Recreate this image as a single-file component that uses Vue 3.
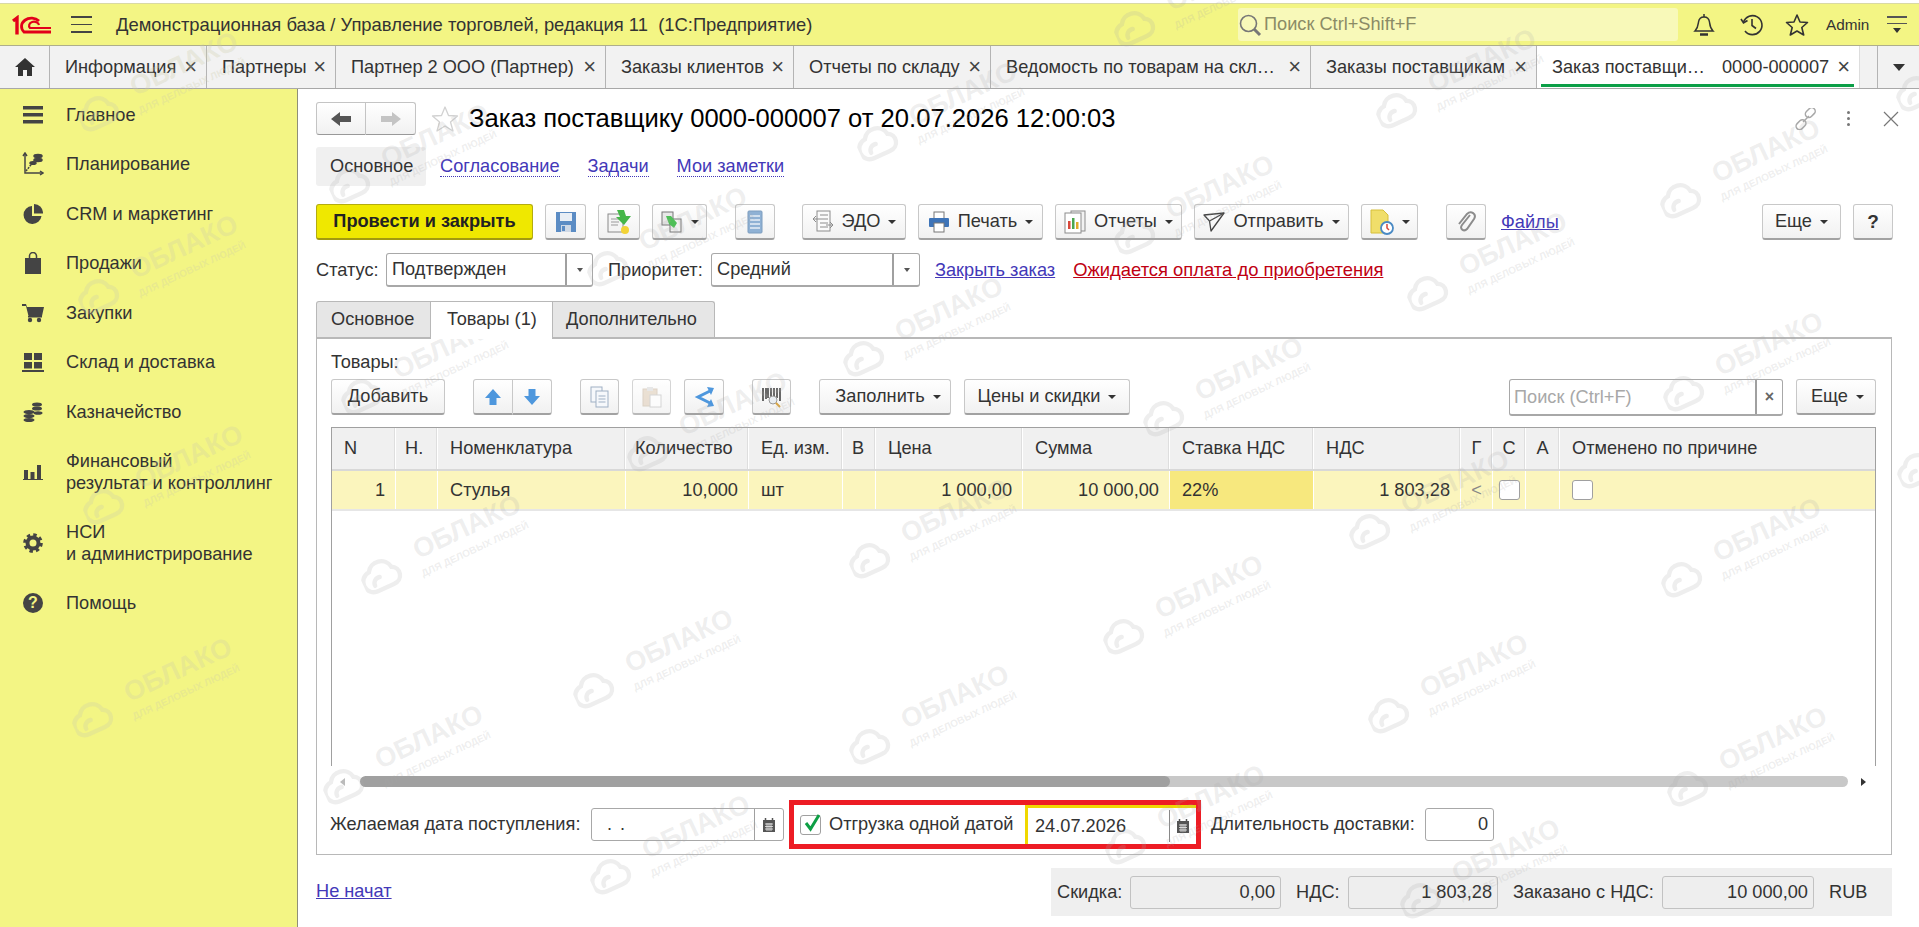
<script setup>
const appTitle = 'Демонстрационная база / Управление торговлей, редакция 11  (1С:Предприятие)'

const tabs = [
  { text: 'Информация', cls: 't1' },
  { text: 'Партнеры', cls: 't2' },
  { text: 'Партнер 2 ООО (Партнер)', cls: 't3' },
  { text: 'Заказы клиентов', cls: 't4' },
  { text: 'Отчеты по складу', cls: 't5' },
  { text: 'Ведомость по товарам на скл…', cls: 't6' },
  { text: 'Заказы поставщикам', cls: 't7' }
]

const clouds = [
  [98, 110], [98, 293], [103, 503], [92, 716],
  [349, 182], [361, 393], [381, 573], [343, 783],
  [607, 265], [647, 450], [593, 687], [610, 873],
  [877, 140], [863, 355], [869, 557], [869, 743],
  [1134, 25], [1134, 233], [1163, 415], [1123, 633], [1125, 843],
  [1396, 107], [1427, 290], [1369, 528], [1388, 712], [1420, 897],
  [1680, 197], [1683, 390], [1681, 576], [1687, 785],
  [1916, 90], [1917, 467]
]

const columns = [
  { title: 'N', cls: 'c-n', value: '1', align: 'right' },
  { title: 'Н.', cls: 'c-h', value: '' },
  { title: 'Номенклатура', cls: '', value: 'Стулья' },
  { title: 'Количество', cls: 'c-qty', value: '10,000', align: 'right' },
  { title: 'Ед. изм.', cls: '', value: 'шт' },
  { title: 'В', cls: 'c-v', value: '' },
  { title: 'Цена', cls: '', value: '1 000,00', align: 'right' },
  { title: 'Сумма', cls: '', value: '10 000,00', align: 'right' },
  { title: 'Ставка НДС', cls: '', value: '22%', current: true },
  { title: 'НДС', cls: '', value: '1 803,28', align: 'right' },
  { title: 'Г', cls: 'c-mid', value: '<', muted: true },
  { title: 'С', cls: 'c-mid', check: true },
  { title: 'А', cls: 'c-mid', value: '' },
  { title: 'Отменено по причине', cls: '', check: true }
]
</script>

<template>
  <div class="page">
    <header class="topbar">
      <svg class="logo" viewBox="0 0 39 20" width="39" height="20" fill="none" stroke="#e2001a">
        <path d="M1 6 L5 3 V19.500" stroke-width="3.400" />
        <path d="M27 6 A9 7.500 0 1 0 12 17 H39" stroke-width="2.800" />
        <path d="M27 10 A5 4 0 1 0 18 13 H39" stroke-width="2.200" />
      </svg>
      <div class="burger"><i></i><i></i><i></i></div>
      <div class="app-title">{{ appTitle }}</div>
      <div class="global-search">
        <svg viewBox="0 0 24 24" width="24" height="24" fill="none" stroke="#777" stroke-width="1.600">
          <circle cx="10.500" cy="10.500" r="8" />
          <path d="M16 16 L22 22" stroke-width="3" />
        </svg>
        <span>Поиск Ctrl+Shift+F</span>
      </div>
      <div class="top-icons">
        <svg viewBox="0 0 22 24" width="22" height="24" fill="none" stroke="#333" stroke-width="1.500">
          <path d="M2 18 H20 C17 15 17 13 16.500 9 C16 5.500 14 4 11 4 C8 4 6 5.500 5.500 9 C5 13 5 15 2 18 Z" />
          <path d="M11 1 V4" />
          <path d="M7 21.500 H15" stroke-width="2.500" />
        </svg>
        <svg viewBox="0 0 24 24" width="24" height="24" fill="none" stroke="#333" stroke-width="1.600">
          <path d="M3.500 9 A9.500 9.500 0 1 1 5 18" />
          <path d="M1 6 L3.500 10 L7.500 7.500" />
          <path d="M12 6 V12.500 L16 15.500" />
        </svg>
        <svg viewBox="0 0 24 24" width="24" height="24" fill="none" stroke="#333" stroke-width="1.600" stroke-linejoin="round">
          <path d="M12 2 L15 9 L22.500 9.500 L16.800 14.500 L18.700 22 L12 18 L5.300 22 L7.200 14.500 L1.500 9.500 L9 9 Z" />
        </svg>
        <span class="admin">Admin</span>
        <div class="user-menu">
          <i class="l1"></i><i class="l2"></i><b></b>
        </div>
      </div>
    </header>

    <nav class="tabs">
      <div class="tab home">
        <svg viewBox="0 0 20 18" width="20" height="18" fill="#333">
          <path d="M10 0 L20 9 H17 V18 H12 V12 H8 V18 H3 V9 H0 Z" />
        </svg>
      </div>
      <div v-for="t in tabs" :key="t.text" class="tab" :class="t.cls">
        <span class="tab-text">{{ t.text }}</span>
        <span class="tab-x">×</span>
      </div>
      <div class="tab active">
        <span class="a-name">Заказ поставщи…</span>
        <span class="a-num">0000-000007</span>
        <span class="tab-x">×</span>
      </div>
      <div class="tab spacer"></div>
      <div class="tab more"><b class="caret big"></b></div>
    </nav>

    <div class="body">
      <aside class="side">
        <div class="side-item">
          <svg viewBox="0 0 20 20" width="20" height="20" fill="#444"><rect y="1" width="20" height="3.500" /><rect y="8" width="20" height="3.500" /><rect y="15" width="20" height="3.500" /></svg>
          <span>Главное</span>
        </div>
        <div class="side-item">
          <svg viewBox="0 0 22 24" width="22" height="24" fill="none" stroke="#444" stroke-width="1.500"><path d="M3 1 V21 H21" /><path d="M1 4 L3 1 L5 4 M18 19 L21 21 L18 23" /><path d="M4 19 L12 9" stroke-dasharray="2 1" /><ellipse cx="16" cy="4" rx="4" ry="1.500" fill="#444" /><ellipse cx="16" cy="8" rx="4" ry="1.500" fill="#444" /><ellipse cx="11" cy="11" rx="3" ry="1.300" fill="#444" /></svg>
          <span>Планирование</span>
        </div>
        <div class="side-item">
          <svg viewBox="0 0 20 20" width="20" height="20" fill="#444"><path d="M9 2 A9 9 0 1 0 18.500 12 H9 Z" /><path d="M11 0 A9 9 0 0 1 20 9.500 H11 Z" /></svg>
          <span>CRM и маркетинг</span>
        </div>
        <div class="side-item">
          <svg viewBox="0 0 18 22" width="18" height="22" fill="#444"><rect x="1" y="6" width="16" height="16" /><path d="M5.500 8 V4 A3.500 3.500 0 0 1 12.500 4 V8" fill="none" stroke="#444" stroke-width="1.500" /></svg>
          <span>Продажи</span>
        </div>
        <div class="side-item">
          <svg viewBox="0 0 22 20" width="22" height="20" fill="#444"><path d="M0 1 H4 L5 4 H22 L20 13 H6.500 L4 3 H0 Z" /><circle cx="8" cy="17" r="2.200" /><circle cx="17" cy="17" r="2.200" /><rect x="6" y="13" width="14" height="1.500" /></svg>
          <span>Закупки</span>
        </div>
        <div class="side-item">
          <svg viewBox="0 0 22 20" width="22" height="20" fill="#444"><rect x="2" y="1" width="8" height="7" /><rect x="12" y="1" width="8" height="7" /><rect x="2" y="10" width="8" height="6.500" /><rect x="12" y="10" width="8" height="6.500" /><rect y="18" width="22" height="2" /></svg>
          <span>Склад и доставка</span>
        </div>
        <div class="side-item">
          <svg viewBox="0 0 20 20" width="20" height="20" fill="#444"><ellipse cx="6" cy="10" rx="5.500" ry="2" /><ellipse cx="6" cy="14" rx="5.500" ry="2" /><ellipse cx="6" cy="18" rx="5.500" ry="2" /><ellipse cx="14" cy="2.500" rx="5" ry="2" /><ellipse cx="14" cy="6.500" rx="5" ry="2" /><ellipse cx="15" cy="11" rx="4.500" ry="1.800" /></svg>
          <span>Казначейство</span>
        </div>
        <div class="side-item double">
          <svg viewBox="0 0 20 16" width="20" height="16" fill="#444"><rect x="1" y="6" width="4" height="9" /><rect x="7.500" y="8" width="4" height="7" /><rect x="14" y="1" width="4" height="14" /><rect y="15" width="20" height="1" /></svg>
          <span>Финансовый<br />результат и контроллинг</span>
        </div>
        <div class="side-item double">
          <svg viewBox="0 0 20 20" width="20" height="20" fill="none" stroke="#444"><circle cx="10" cy="10" r="5.500" stroke-width="4" /><circle cx="10" cy="10" r="8.200" stroke-width="3.200" stroke-dasharray="3.400 3.040" /></svg>
          <span>НСИ<br />и администрирование</span>
        </div>
        <div class="side-item">
          <div class="help-ico">?</div>
          <span>Помощь</span>
        </div>
      </aside>

      <main class="form">
        <div class="form-head">
          <div class="nav-group">
            <div class="nav-btn">
              <svg viewBox="0 0 20 14" width="20" height="14" fill="#555"><path d="M0 7 L9 0 V4 H20 V10 H9 V14 Z" /></svg>
            </div>
            <div class="nav-btn">
              <svg viewBox="0 0 20 14" width="20" height="14" fill="#c4c4c4"><path d="M20 7 L11 0 V4 H0 V10 H11 V14 Z" /></svg>
            </div>
          </div>
          <svg class="star" viewBox="0 0 28 28" width="28" height="28" fill="none" stroke="#d2d2d2" stroke-width="1.300" stroke-linejoin="round">
            <path d="M14 2 L17.500 10.500 L26.500 11 L19.500 17 L22 26 L14 21 L6 26 L8.500 17 L1.500 11 L10.500 10.500 Z" />
          </svg>
          <h1 class="form-title">Заказ поставщику 0000-000007 от 20.07.2026 12:00:03</h1>
          <div class="head-icons">
            <svg viewBox="0 0 22 22" width="22" height="22" fill="none" stroke="#a8a8a8" stroke-width="1.500">
              <rect x="11" y="1" width="11" height="7" rx="3.500" transform="rotate(-45 16 6)" />
              <rect x="0" y="13" width="11" height="7" rx="3.500" transform="rotate(-45 6 16)" />
              <path d="M8 14 L14 8" />
            </svg>
            <div class="dots"><i></i><i></i><i></i></div>
            <svg viewBox="0 0 16 16" width="16" height="16" fill="none" stroke="#777" stroke-width="1.200"><path d="M1 1 L15 15 M15 1 L1 15" /></svg>
          </div>
        </div>

        <div class="sub-nav">
          <span class="sub-current">Основное</span>
          <a class="sub-link l-a">Согласование</a>
          <a class="sub-link l-b">Задачи</a>
          <a class="sub-link l-c">Мои заметки</a>
        </div>

        <div class="cmd">
          <button class="btn primary">Провести и закрыть</button>
          <button class="btn w41">
            <svg viewBox="0 0 22 22" width="22" height="22"><rect x="1" y="1" width="20" height="20" fill="#5b8cc4" /><rect x="5" y="2" width="12" height="8" fill="#e8eef5" /><rect x="6" y="14" width="10" height="7" fill="#cfd9e6" /><rect x="7" y="15" width="3" height="5" fill="#5b8cc4" /></svg>
          </button>
          <button class="btn w42">
            <svg viewBox="0 0 26 26" width="26" height="26"><rect x="2" y="5" width="15" height="18" fill="#f4f4f4" stroke="#8a8a8a" /><path d="M5 10 H13 M5 13 H13 M5 16 H12" stroke="#9a9a9a" /><path d="M11 1 H18 L20 7 H25 L18 16 L10 8 H14 Z" fill="#45b649" /><circle cx="19" cy="21" r="4" fill="#f2d337" /></svg>
          </button>
          <button class="btn w55">
            <svg viewBox="0 0 22 22" width="22" height="22"><rect x="1" y="1" width="11" height="13" fill="#e8e8e8" stroke="#777" /><rect x="9" y="8" width="11" height="13" fill="#f1f1f1" stroke="#777" /><path d="M5 5 L10 5 L16 12 L13 17 L8 13 Z" fill="#4fbf58" /></svg>
            <b class="caret"></b>
          </button>
          <button class="btn w40 gap-r">
            <svg viewBox="0 0 16 24" width="16" height="24"><rect x="1" y="1" width="14" height="22" rx="1" fill="#8fb1d4" stroke="#7d9dbf" /><path d="M3 6 H13 M3 10 H13 M3 14 H13 M3 18 H13" stroke="#e7eef6" stroke-width="1.500" /></svg>
          </button>
          <button class="btn w104">
            <svg viewBox="0 0 22 24" width="22" height="24" fill="none" stroke="#8c8c8c"><rect x="5" y="1" width="13" height="20" fill="#fafafa" /><path d="M8 5 H16 M8 9 H16 M8 13 H16 M8 17 H16" /><path d="M1 9 L4 6 M1 9 L4 12 M1 9 H8 M21 15 L18 12 M21 15 L18 18 M21 15 H14" /></svg>
            <span>ЭДО</span><b class="caret"></b>
          </button>
          <button class="btn w125">
            <svg viewBox="0 0 22 22" width="22" height="22"><rect x="6" y="1" width="10" height="7" fill="#fff" stroke="#777" /><rect x="1" y="7" width="20" height="9" rx="1" fill="#3e74b8" /><rect x="6" y="12" width="10" height="9" fill="#fff" stroke="#777" /></svg>
            <span>Печать</span><b class="caret"></b>
          </button>
          <button class="btn w127">
            <svg viewBox="0 0 22 24" width="22" height="24"><rect x="7" y="1" width="14" height="20" fill="#f2f2f2" stroke="#8c8c8c" /><rect x="1" y="3" width="16" height="20" fill="#fff" stroke="#8c8c8c" /><rect x="4" y="11" width="2.500" height="8" fill="#d8483b" /><rect x="8" y="8" width="2.500" height="11" fill="#4aa64e" /><rect x="12" y="12" width="2.500" height="7" fill="#e0a92a" /></svg>
            <span>Отчеты</span><b class="caret"></b>
          </button>
          <button class="btn w155">
            <svg viewBox="0 0 22 20" width="22" height="20" fill="none" stroke="#444" stroke-width="1.300" stroke-linejoin="round"><path d="M1 3 L21 1 L8 19 L6.500 9 Z" /><path d="M6.500 9 L21 1" /></svg>
            <span>Отправить</span><b class="caret"></b>
          </button>
          <button class="btn w57">
            <svg viewBox="0 0 24 26" width="24" height="26"><path d="M1 1 H13 L18 6 V24 H1 Z" fill="#f0de6a" stroke="#d6bf3b" /><circle cx="17" cy="19" r="6" fill="#fff" stroke="#4a8ac4" stroke-width="1.800" /><path d="M17 15 V19 L19 21" fill="none" stroke="#d8483b" stroke-width="1.500" /></svg>
            <b class="caret"></b>
          </button>
          <button class="btn w40 clip">
            <svg viewBox="0 0 20 24" width="20" height="24" fill="none" stroke="#8c8c8c" stroke-width="2"><path d="M14 5 L6 15 C3 19 8 22 11 19 L18 9 C21 4 15 0 11 4 L3 14" /></svg>
          </button>
          <a class="files">Файлы</a>
          <button class="btn w79 push">Еще<b class="caret"></b></button>
          <button class="btn w40 question">?</button>
        </div>

        <div class="status-row">
          <span class="lbl st-lbl">Статус:</span>
          <div class="combo status-combo"><span>Подтвержден</span><div class="combo-btn"><b class="caret sm"></b></div></div>
          <span class="lbl pr-lbl">Приоритет:</span>
          <div class="combo prio-combo"><span>Средний</span><div class="combo-btn"><b class="caret sm"></b></div></div>
          <a class="close-link">Закрыть заказ</a>
          <a class="red-link">Ожидается оплата до приобретения</a>
        </div>

        <div class="page-tabs">
          <div class="ptab p1">Основное</div>
          <div class="ptab p2 on">Товары (1)</div>
          <div class="ptab p3">Дополнительно</div>
        </div>

        <section class="panel">
          <div class="goods-label">Товары:</div>
          <div class="goods-bar">
            <button class="btn add">Добавить</button>
            <div class="pair">
              <button class="btn half">
                <svg viewBox="0 0 18 18" width="18" height="18" fill="#4e97dd"><path d="M9 1 L17 10 H12.500 V17 H5.500 V10 H1 Z" /></svg>
              </button>
              <button class="btn half">
                <svg viewBox="0 0 18 18" width="18" height="18" fill="#4e97dd"><path d="M9 17 L17 8 H12.500 V1 H5.500 V8 H1 Z" /></svg>
              </button>
            </div>
            <button class="btn w39 m-copy">
              <svg viewBox="0 0 20 22" width="20" height="22" fill="#f6f8fb" stroke="#9fb0c4"><rect x="1" y="1" width="11" height="15" /><rect x="6" y="5" width="12" height="16" /><path d="M8.500 10 H15.500 M8.500 13 H15.500 M8.500 16 H15.500" /></svg>
            </button>
            <button class="btn w39 disabled">
              <svg viewBox="0 0 20 22" width="20" height="22" opacity=".6"><rect x="1" y="3" width="14" height="17" fill="#d6bfa3" stroke="#b8a186" /><rect x="5" y="1" width="6" height="4" fill="#cfcfcf" /><rect x="8" y="9" width="11" height="12" fill="#fff" stroke="#aaa" /></svg>
            </button>
            <button class="btn w40">
              <svg viewBox="0 0 22 22" width="22" height="22" fill="none" stroke="#4e97dd" stroke-width="3"><path d="M17 5 L5 11 L17 17" /><path d="M14 1 L21 2 L18 9 Z M14 21 L21 20 L18 13 Z" fill="#4e97dd" stroke="none" /></svg>
            </button>
            <button class="btn w39 m-bar">
              <svg viewBox="0 0 22 22" width="22" height="22"><path d="M2 2 V15 M5 2 V13 M7 2 V12 M10 2 V11 M13 2 V11 M16 2 V12 M19 2 V15" stroke="#444" stroke-width="1.600" /><circle cx="12" cy="14" r="4" fill="#e9eef3" stroke="#9a9a9a" /><path d="M15 17 L19 21" stroke="#d9a441" stroke-width="2" /></svg>
            </button>
            <button class="btn w132 m-fill">Заполнить<b class="caret"></b></button>
            <button class="btn w166">Цены и скидки<b class="caret"></b></button>
            <div class="table-search">
              <span>Поиск (Ctrl+F)</span>
              <div class="clear">×</div>
            </div>
            <button class="btn w80">Еще<b class="caret"></b></button>
          </div>

          <div class="table">
            <div class="tr head">
              <div v-for="c in columns" :key="c.title" class="td" :class="c.cls">{{ c.title }}</div>
            </div>
            <div class="tr row">
              <div
                v-for="c in columns"
                :key="c.title"
                class="td"
                :class="[c.cls, { right: c.align === 'right', current: c.current, muted: c.muted }]"
              >
                <i v-if="c.check" class="box"></i>
                <template v-else>{{ c.value }}</template>
              </div>
            </div>
          </div>

          <div class="hscroll">
            <b class="arrow left"></b>
            <div class="track"><div class="thumb"></div></div>
            <b class="arrow right"></b>
          </div>

          <div class="date-row">
            <span class="lbl wish-lbl">Желаемая дата поступления:</span>
            <div class="date-field wish">
              <span class="date-val dots-val">. .</span>
              <div class="cal">
                <svg viewBox="0 0 12 14" width="12" height="14" fill="#555"><path d="M0 2 H12 V14 H0 Z" /><path d="M2.500 0 V3 M9.500 0 V3" stroke="#555" stroke-width="1.500" /><path d="M2 6 H10 M2 8.500 H10 M2 11 H10 M4 5 V13 M6 5 V13 M8 5 V13" stroke="#eee" stroke-width=".8" /></svg>
              </div>
            </div>
            <div class="marked">
              <i class="box checked">
                <svg viewBox="0 0 20 20" width="20" height="20" fill="none" stroke="#0e9f45" stroke-width="3"><path d="M4 10 L8.500 16 L17 2" /></svg>
              </i>
              <span class="marked-lbl">Отгрузка одной датой</span>
              <div class="date-field active-date">
                <span class="date-val">24.07.2026</span>
                <div class="cal">
                  <svg viewBox="0 0 12 14" width="12" height="14" fill="#555"><path d="M0 2 H12 V14 H0 Z" /><path d="M2.500 0 V3 M9.500 0 V3" stroke="#555" stroke-width="1.500" /><path d="M2 6 H10 M2 8.500 H10 M2 11 H10 M4 5 V13 M6 5 V13 M8 5 V13" stroke="#eee" stroke-width=".8" /></svg>
                </div>
              </div>
            </div>
            <span class="lbl dur-lbl">Длительность доставки:</span>
            <div class="dur-field">0</div>
          </div>
        </section>

        <div class="footer">
          <a class="not-started">Не начат</a>
          <div class="totals">
            <span class="lbl tl-a">Скидка:</span>
            <div class="total-field tf-a">0,00</div>
            <span class="lbl tl-b">НДС:</span>
            <div class="total-field tf-b">1 803,28</div>
            <span class="lbl tl-c">Заказано с НДС:</span>
            <div class="total-field tf-c">10 000,00</div>
            <span class="lbl rub">RUB</span>
          </div>
        </div>
      </main>
    </div>

    <div class="watermarks">
      <div
        v-for="c in clouds"
        :key="c[0] + '-' + c[1]"
        class="wm"
        :class="{ 'on-side': c[0] < 250 }"
        :style="{ left: c[0] + 'px', top: c[1] + 'px' }"
      >
        <svg class="wm-cloud" viewBox="0 0 48 42" width="42" height="37" fill="none" stroke-width="5" stroke-linecap="round">
          <path d="M13 38 H33 A10 10 0 0 0 38 19 A14 14 0 0 0 12 14 A12 12 0 0 0 13 38" />
          <path d="M12 31 A7 7 0 0 1 21 24" />
        </svg>
        <span class="wm-title">ОБЛАКО</span>
        <span class="wm-sub">ДЛЯ ДЕЛОВЫХ ЛЮДЕЙ</span>
      </div>
    </div>
  </div>
</template>

<style>
html, body {
  margin: 0;
  overflow: hidden;
  background: #fff;
}
</style>

<style scoped>
.page {
  position: relative;
  width: 1919px;
  height: 927px;
  overflow: hidden;
  padding-top: 3px;
  box-sizing: border-box;
  font-family: "Liberation Sans", Arial, sans-serif;
  font-size: 18.200px;
  color: #333;
  background: #fff;
}
.topbar {
  height: 43px;
  box-sizing: border-box;
  display: flex;
  align-items: center;
  background: #f3f584;
  border-top: 1px solid #d9d9a4;
  border-bottom: 1px solid #aeae8c;
}
.logo { margin-left: 12px; }
.burger { margin-left: 20px; width: 21px; display: flex; flex-direction: column; gap: 6px; }
.burger i { display: block; height: 1.500px; background: #444; }
.app-title { margin-left: 24px; flex: 1; white-space: pre; color: #333; font-size: 18.400px; }
.global-search {
  width: 440px;
  height: 33px;
  display: flex;
  align-items: center;
  gap: 2px;
  background: #f8f9b9;
  border-radius: 3px;
  color: #8b8b66;
}
.top-icons { width: 241px; display: flex; align-items: center; height: 100%; position: relative; }
.top-icons svg:nth-child(1) { margin-left: 15px; }
.top-icons svg:nth-child(2) { margin-left: 25px; }
.top-icons svg:nth-child(3) { margin-left: 21px; }
.admin { margin-left: 17px; font-size: 15.300px; }
.user-menu { margin-left: 18px; width: 20px; display: flex; flex-direction: column; align-items: center; }
.user-menu i { display: block; height: 1.500px; background: #555; }
.user-menu .l1 { width: 20px; margin-bottom: 5px; }
.user-menu .l2 { width: 20px; margin-bottom: 4px; }
.user-menu b { width: 0; height: 0; border: 4px solid transparent; border-top: 5px solid #333; border-bottom: 0; }

.tabs {
  height: 43px;
  box-sizing: border-box;
  display: flex;
  background: #f2f2f2;
  border-bottom: 1px solid #a8a8a8;
}
.tab {
  box-sizing: border-box;
  height: 100%;
  flex: none;
  display: flex;
  align-items: center;
  justify-content: space-between;
  padding: 0 9px 0 15px;
  border-right: 1px solid #b4b4b4;
  color: #333;
  overflow: hidden;
}
.tab-text { white-space: nowrap; }
.tab-x { font-size: 22px; line-height: 1; color: #444; flex: none; }
.home { width: 50px; padding: 0; justify-content: center; }
.t1 { width: 157px; }
.t2 { width: 129px; }
.t3 { width: 270px; }
.t4 { width: 188px; }
.t5 { width: 197px; }
.t6 { width: 320px; }
.t7 { width: 226px; }
.active {
  width: 323px;
  background: #fff;
  position: relative;
  border-right: 1px solid #ddd;
}
.active::after {
  content: "";
  position: absolute;
  left: 4px;
  right: 5px;
  bottom: 1px;
  height: 3px;
  background: #0c9f47;
}
.a-name { white-space: nowrap; }
.a-num { white-space: nowrap; margin-left: auto; margin-right: 8px; }
.spacer { width: 18px; padding: 0; }
.more { flex: 1; padding: 0; border-right: 0; justify-content: center; }

.body { display: flex; height: 838px; }
.side {
  width: 298px;
  box-sizing: border-box;
  flex: none;
  background: #f3f584;
  border-right: 1px solid #8f8f78;
  padding-top: 1px;
}
.side-item {
  height: 49.500px;
  display: flex;
  align-items: center;
  position: relative;
  padding-left: 66px;
  line-height: 22px;
  color: #333;
}
.side-item.double { height: 71px; }
.side-item svg, .help-ico { position: absolute; left: 33px; top: 50%; transform: translate(-50%, -50%); }
.help-ico {
  width: 20px;
  height: 20px;
  border-radius: 50%;
  background: #444;
  color: #f3f584;
  font-weight: 700;
  font-size: 16px;
  line-height: 20px;
  text-align: center;
}

.form { flex: 1; padding: 13px 27px 0 18px; min-width: 0; }
.form-head { height: 33px; display: flex; align-items: center; }
.nav-group { display: flex; }
.nav-btn {
  width: 50px;
  height: 33px;
  box-sizing: border-box;
  display: flex;
  align-items: center;
  justify-content: center;
  background: linear-gradient(#fff, #f1f1f1);
  border: 1px solid #c4c4c4;
  border-bottom-color: #999;
}
.nav-btn:first-child { border-radius: 3px 0 0 3px; }
.nav-btn:last-child { border-radius: 0 3px 3px 0; border-left: 0; }
.star { margin-left: 15px; }
.form-title { margin: 0 0 0 10px; font-size: 25.600px; font-weight: 400; color: #000; white-space: nowrap; flex: 1; }
.head-icons { display: flex; align-items: center; margin-right: -7px; }
.dots { display: flex; flex-direction: column; gap: 3px; margin: 0 33px 0 30px; }
.dots i { display: block; width: 3px; height: 3px; border-radius: 50%; background: #777; }

.sub-nav { margin-top: 12px; height: 39px; display: flex; align-items: center; }
.sub-current {
  width: 110px;
  height: 39px;
  box-sizing: border-box;
  padding-left: 14px;
  line-height: 38px;
  background: #f0f0f0;
  border-radius: 3px;
}
.sub-link { color: #4338b8; border-bottom: 1px dotted #4338b8; line-height: 20px; }
.l-a { margin-left: 14px; }
.l-b { margin-left: 28px; }
.l-c { margin-left: 28px; }

.cmd { margin-top: 18px; height: 36px; display: flex; align-items: stretch; gap: 12px; }
.btn {
  box-sizing: border-box;
  padding: 0;
  display: flex;
  align-items: center;
  justify-content: center;
  gap: 8px;
  height: 36px;
  font: inherit;
  color: #333;
  background: linear-gradient(#fff, #f1f1f1);
  border: 1px solid #c8c8c8;
  border-bottom: 2px solid #a2a2a2;
  border-radius: 3px;
  flex: none;
}
.primary {
  width: 217px;
  background: #efe800;
  border-color: #b4ac10;
  border-bottom-color: #a29a10;
  font-weight: 700;
  color: #222;
}
.w40 { width: 40px; }
.w41 { width: 41px; }
.w42 { width: 42px; }
.w55 { width: 55px; }
.w57 { width: 57px; }
.w79 { width: 79px; }
.w80 { width: 80px; padding-left: 3px; }
.w104 { width: 104px; }
.w125 { width: 125px; }
.w127 { width: 127px; }
.w155 { width: 155px; }
.w39 { width: 39px; }
.w132 { width: 132px; padding-left: 6px; }
.w166 { width: 166px; }
.gap-r { margin-right: 15px; margin-left: 16px; }
.clip { margin-left: 16px; }
.files { align-self: center; margin-left: 3px; color: #4338b8; text-decoration: underline; }
.push { margin-left: auto; }
.question { font-weight: 700; font-size: 19px; margin-right: -1px; }
.caret {
  display: inline-block;
  width: 0;
  height: 0;
  border-left: 4px solid transparent;
  border-right: 4px solid transparent;
  border-top: 4px solid #333;
  flex: none;
}
.caret.big { border-left-width: 6px; border-right-width: 6px; border-top-width: 7px; }
.caret.sm { border-left-width: 3px; border-right-width: 3px; border-top-width: 4px; border-top-color: #555; }

.status-row { margin-top: 13px; height: 34px; display: flex; align-items: center; }
.lbl { color: #333; white-space: nowrap; flex: none; }
.st-lbl { width: 70px; }
.combo {
  height: 34px;
  box-sizing: border-box;
  display: flex;
  align-items: center;
  border: 1px solid #a8a8a8;
  border-bottom-width: 2px;
  border-radius: 3px;
  padding-left: 5px;
  background: #fff;
  flex: none;
}
.combo span { flex: 1; }
.combo-btn {
  width: 27px;
  height: 100%;
  box-sizing: border-box;
  border-left: 2px solid #a0a0a0;
  display: flex;
  align-items: center;
  justify-content: center;
}
.status-combo { width: 207px; }
.pr-lbl { margin-left: 15px; width: 103px; }
.prio-combo { width: 209px; }
.close-link { margin-left: 15px; color: #4338b8; text-decoration: underline; white-space: nowrap; }
.red-link { margin-left: 18px; color: #c00012; text-decoration: underline; white-space: nowrap; font-size: 18.400px; }

.page-tabs { margin-top: 14px; height: 36px; display: flex; position: relative; z-index: 1; }
.ptab {
  box-sizing: border-box;
  height: 36px;
  line-height: 34px;
  padding-left: 16px;
  background: #e6e6e6;
  border: 1px solid #b8b8b8;
  border-bottom: 0;
  border-left: 0;
}
.p1 { width: 115px; border-left: 1px solid #b8b8b8; border-radius: 3px 0 0 0; padding-left: 14px; }
.p2 { width: 122px; }
.p3 { width: 162px; border-radius: 0 3px 0 0; padding-left: 13px; }
.on { background: #fff; height: 38px; }

.panel {
  height: 518px;
  box-sizing: border-box;
  border: 1px solid #b8b8b8;
  border-top-width: 2px;
  padding: 13px 15px 0 14px;
}
.goods-label { height: 20px; line-height: 20px; }
.goods-bar { margin-top: 7px; height: 36px; display: flex; gap: 13px; align-items: flex-start; }
.goods-bar .btn { height: 36px; }
.add { width: 114px; }
.pair { display: flex; margin-left: 15px; }
.half { width: 40px; }
.pair .half:first-child { border-radius: 3px 0 0 3px; }
.pair .half:last-child { border-radius: 0 3px 3px 0; border-left: 0; width: 39px; }
.m-copy { margin-left: 15px; }
.disabled { opacity: .75; }
.m-bar { margin-left: 15px; }
.m-fill { margin-left: 15px; }
.table-search {
  margin-left: auto;
  width: 274px;
  height: 37px;
  box-sizing: border-box;
  display: flex;
  align-items: center;
  border: 1px solid #a8a8a8;
  border-bottom-width: 2px;
  border-radius: 3px;
  padding-left: 4px;
  color: #a8a8a8;
  background: #fff;
}
.table-search span { flex: 1; }
.clear {
  width: 27px;
  height: 100%;
  box-sizing: border-box;
  border-left: 2px solid #a0a0a0;
  display: flex;
  align-items: center;
  justify-content: center;
  color: #666;
  font-weight: 700;
  font-size: 16px;
}

.table {
  margin-top: 12px;
  height: 339px;
  box-sizing: border-box;
  border: 1px solid #a0a0a0;
  border-bottom: 0;
}
.tr {
  display: grid;
  grid-template-columns: 64px 42px 188px 123px 94px 33px 147px 147px 144px 147px 32px 33px 34px 1fr;
}
.head { height: 43px; background: #f0f0f0; border-bottom: 2px solid #d8d8d8; box-sizing: border-box; }
.row { height: 40px; background: #fbf5bd; border-bottom: 2px solid #e6e6e6; box-sizing: border-box; }
.td {
  box-sizing: border-box;
  padding: 0 10px 0 12px;
  display: flex;
  align-items: center;
  white-space: nowrap;
  overflow: hidden;
  border-right: 1px solid #fff;
  min-width: 0;
}
.head .td { box-shadow: inset -1px 0 #dedede; }
.td:last-child { border-right: 0; box-shadow: none !important; }
.right { justify-content: flex-end; }
.current { background: #f7e87e; }
.muted { color: #888; }
.c-h, .c-v { padding-left: 9px; padding-right: 0; }
.c-qty { padding-left: 9px; }
.c-mid { padding: 0; justify-content: center; }
.box {
  display: block;
  width: 21px;
  height: 20px;
  box-sizing: border-box;
  background: #fff;
  border: 1px solid #a0a0a0;
  border-radius: 3px;
  flex: none;
}

.hscroll { margin-top: 10px; height: 11px; display: flex; align-items: center; position: relative; }
.track {
  position: absolute;
  left: 29px;
  right: 28px;
  top: 0;
  bottom: 0;
  background: #c8c8c8;
  border-radius: 6px;
  overflow: hidden;
}
.thumb { width: 810px; height: 100%; background: #a0a0a0; border-radius: 6px; }
.arrow { position: absolute; width: 0; height: 0; border: 4px solid transparent; }
.arrow.left { left: 9px; border-right: 5px solid #bbb; border-left: 0; }
.arrow.right { right: 10px; border-left: 5px solid #333; border-right: 0; }

.date-row { margin-top: 13px; height: 49px; display: flex; align-items: center; position: relative; margin-left: -1px; }
.wish-lbl { width: 261px; }
.date-field {
  height: 33px;
  box-sizing: border-box;
  display: flex;
  align-items: center;
  border: 1px solid #a8a8a8;
  border-radius: 3px;
  flex: none;
}
.wish { width: 193px; }
.date-val { flex: 1; padding-left: 7px; white-space: pre; }
.dots-val { padding-left: 15px; word-spacing: 3px; }
.cal {
  width: 29px;
  height: 100%;
  box-sizing: border-box;
  border-left: 1px solid #a0a0a0;
  display: flex;
  align-items: center;
  justify-content: center;
}
.marked {
  margin-left: 5px;
  width: 412px;
  height: 49px;
  box-sizing: border-box;
  flex: none;
  display: flex;
  align-items: center;
  border: 5px solid #ed1c24;
  padding-left: 6px;
}
.box.checked { position: relative; }
.box.checked svg { position: absolute; left: 1px; top: -3px; }
.marked-lbl { margin-left: 8px; white-space: nowrap; width: 196px; flex: none; }
.active-date {
  width: 171px;
  height: 39px;
  border: 0;
  border-radius: 0;
  border-left: 3px solid #f0d800;
  border-top: 3px solid #f0d800;
  align-self: flex-start;
}
.active-date .cal { border-left: 1px solid #888; width: 27px; height: 32px; }
.dur-lbl { margin-left: 10px; width: 214px; }
.dur-field {
  width: 69px;
  height: 33px;
  box-sizing: border-box;
  border: 1px solid #a8a8a8;
  border-radius: 3px;
  text-align: right;
  padding-right: 5px;
  line-height: 31px;
}

.footer { margin-top: 13px; height: 48px; display: flex; align-items: center; justify-content: space-between; }
.not-started { color: #4338b8; text-decoration: underline; margin-top: -2px; }
.totals {
  width: 841px;
  height: 48px;
  box-sizing: border-box;
  background: #efefef;
  display: flex;
  align-items: center;
  padding-left: 6px;
}
.tl-a { width: 73px; }
.tl-b { width: 52px; }
.tl-c { width: 149px; }
.total-field {
  height: 33px;
  box-sizing: border-box;
  background: #eee;
  border: 1px solid #c2c2c2;
  border-radius: 3px;
  text-align: right;
  padding-right: 5px;
  line-height: 31px;
  margin-right: 15px;
  flex: none;
}
.tf-a { width: 151px; }
.tf-b { width: 150px; }
.tf-c { width: 152px; }
.rub { color: #333; }

.watermarks { position: absolute; inset: 0; pointer-events: none; overflow: hidden; }
.wm { position: absolute; width: 0; height: 0; }
.wm-cloud {
  position: absolute;
  left: -21px;
  top: -18px;
  transform: rotate(-25deg);
  stroke: rgba(170, 170, 170, .2);
}
.wm-title, .wm-sub {
  position: absolute;
  white-space: nowrap;
  transform: translate(-50%, -50%) rotate(-25deg);
  font-weight: 700;
  color: rgba(170, 170, 170, .2);
}
.wm-title { left: 86px; top: -46px; font-size: 27px; }
.wm-sub { left: 94px; top: -24px; font-size: 10px; }
.on-side .wm-cloud { stroke: rgba(205, 205, 170, .3); }
.on-side .wm-title, .on-side .wm-sub { color: rgba(205, 205, 170, .3); }
</style>
